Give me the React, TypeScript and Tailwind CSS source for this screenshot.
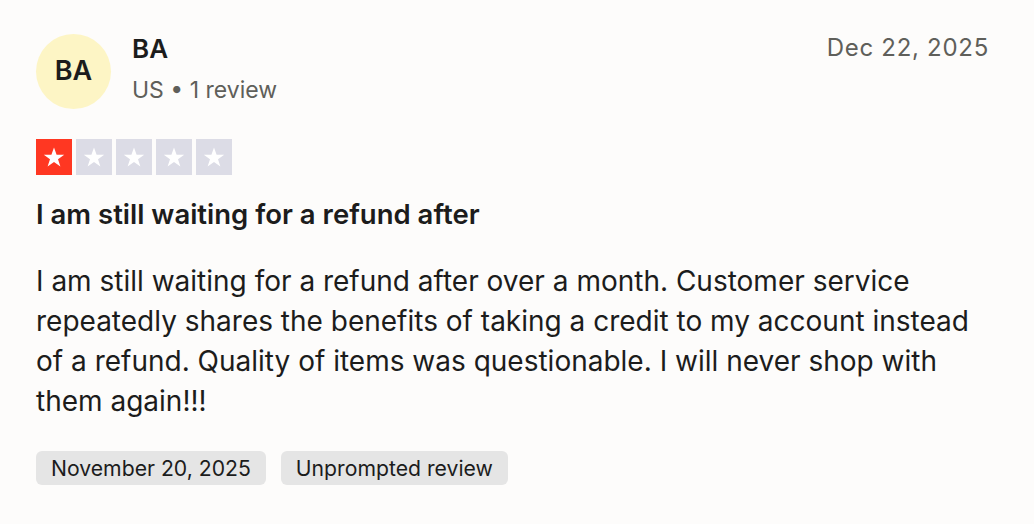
import { useState } from "react";

function Star({ filled }: { filled: boolean }) {
  return (
    <div
      className={`flex h-[36px] w-[36px] items-center justify-center ${
        filled ? "bg-[#ff3722]" : "bg-[#dcdce6]"
      }`}
    >
      <svg viewBox="0 0 24 24" className="h-[24px] w-[24px]" fill="#ffffff">
        <path d="M12 2.5l2.6 7.2h7.6l-6.2 4.5 2.4 7.3L12 17l-6.4 4.5 2.4-7.3L1.8 9.7h7.6z" />
      </svg>
    </div>
  );
}

export default function App() {
  const [rating] = useState(1);

  return (
    <div
      className="min-h-[524px] w-full bg-[#fdfcfb] pl-[36px] pr-[45px] pt-[34px] text-[#1c1c1c]"
      style={{ fontFamily: "Inter, 'Noto Sans', sans-serif" }}
    >
      <div className="flex items-start justify-between">
        <div className="flex items-center gap-[21px]">
          <div className="flex h-[75px] w-[75px] items-center justify-center rounded-full bg-[#fdf5c5] text-[27px] font-semibold">
            BA
          </div>
          <div className="-mt-[6px] flex flex-col">
            <span className="text-[26px] font-semibold leading-[30px]">BA</span>
            <span className="mt-[12px] text-[23px] leading-[28px] text-[#5f5f5a]">
              US • 1 review
            </span>
          </div>
        </div>
        <span className="text-[24px] leading-[28px] tracking-[0.03em] text-[#5f5f5a]">
          Dec 22, 2025
        </span>
      </div>

      <div className="mt-[30px] flex gap-[4px]">
        {[1, 2, 3, 4, 5].map((n) => (
          <Star key={n} filled={n <= rating} />
        ))}
      </div>

      <h2 className="mt-[24px] text-[27.5px] font-semibold leading-[30px]">
        I am still waiting for a refund after
      </h2>

      <p className="mt-[32px] text-[28px] leading-[40px]">
        I am still waiting for a refund after over a month. Customer service
        repeatedly shares the benefits of taking a credit to my account instead
        of a refund. Quality of items was questionable. I will never shop with
        them again!!!
      </p>

      <div className="mt-[30px] flex gap-[15px]">
        <span className="rounded-[6px] bg-[#e5e5e5] px-[15px] py-[4px] text-[21.2px] leading-[26px]">
          November 20, 2025
        </span>
        <span className="rounded-[6px] bg-[#e5e5e5] px-[15px] py-[4px] text-[21.2px] leading-[26px]">
          Unprompted review
        </span>
      </div>
    </div>
  );
}
